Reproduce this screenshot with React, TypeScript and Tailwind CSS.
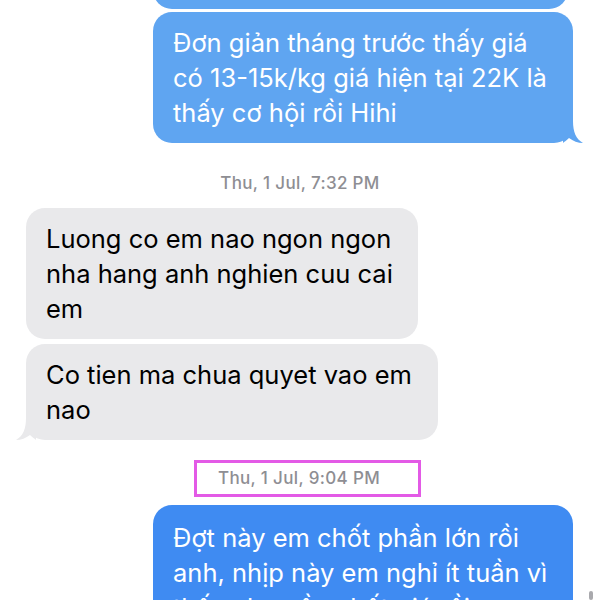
import React from "react";

const font = { fontFamily: "Inter, 'Noto Sans', sans-serif" };

const Tail = ({ color, side }: { color: string; side: "left" | "right" }) => (
  <svg
    width="20"
    height="22"
    viewBox="0 0 20 22"
    className={
      side === "right"
        ? "absolute bottom-0 right-[-10px]"
        : "absolute bottom-0 left-[-10px] -scale-x-100"
    }
  >
    <path d="M0 0 H10 C10 11 13 18 20 22 C15 22 10 20 6 17 C4 19 1 21 0 22 Z" fill={color} />
  </svg>
);

const Sent = ({ children, width, color, tail, className = "" }: any) => (
  <div
    className={`relative shrink-0 self-start ml-[153px] rounded-[19px] px-[20px] py-[13px] text-[25.5px] leading-[35px] text-white ${width} ${color} ${className}`}
  >
    {children}
    {tail && <Tail color={tail} side="right" />}
  </div>
);

const Received = ({ children, width, tail, className = "" }: any) => (
  <div
    className={`relative shrink-0 self-start ml-[26px] rounded-[19px] bg-[#e9e9eb] px-[20px] py-[13px] text-[25.5px] leading-[35px] text-black ${width} ${className}`}
  >
    {children}
    {tail && <Tail color="#e9e9eb" side="left" />}
  </div>
);

export default function App() {
  return (
    <div className="relative flex h-[600px] w-[600px] flex-col overflow-hidden bg-white" style={font}>
      <div className="ml-[153px] -mt-[31px] h-[40px] w-[415px] shrink-0 rounded-[19px] bg-[#5fa5f1]" />

      <Sent width="w-[420px]" color="bg-[#5fa5f1]" tail="#5fa5f1" className="mt-[3px]">
        Đơn giản tháng trước thấy giá có 13-15k/kg giá hiện tại 22K là thấy cơ hội rồi Hihi
      </Sent>

      <div className="mt-[29px] shrink-0 text-center text-[17px] font-medium leading-[22px] tracking-[0.35px] text-[#8e8e93]">
        Thu, 1 Jul, 7:32 PM
      </div>

      <Received width="w-[392px]" className="mt-[14px]">
        Luong co em nao ngon ngon nha hang anh nghien cuu cai em
      </Received>

      <Received width="w-[412px]" tail className="mt-[5px]">
        Co tien ma chua quyet vao em nao
      </Received>

      <div className="ml-[194px] mt-[20px] flex h-[37px] w-[227px] shrink-0 items-center border-[3px] border-[#e35ae6] pl-[21px] text-[17px] font-medium tracking-[0.35px] text-[#8e8e93]">
        Thu, 1 Jul, 9:04 PM
      </div>

      <Sent width="w-[420px]" color="bg-[#3f8bf2]" className="mt-[8px] pt-[15px]">
        Đợt này em chốt phần lớn rồi anh, nhịp này em nghỉ ít tuần vì thấy nhu cầu chốt giá rồi ạ
      </Sent>

      <div className="absolute bottom-0 right-[7px] h-[9px] w-[4px] rounded-full bg-[#a9a9ad]" />
    </div>
  );
}
